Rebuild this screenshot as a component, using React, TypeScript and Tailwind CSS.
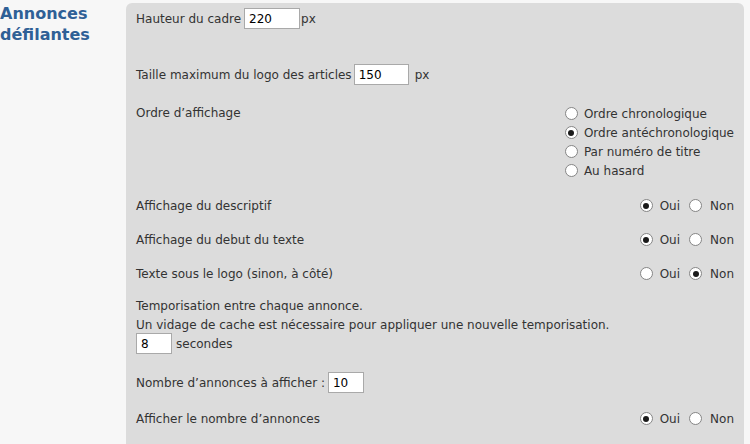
const font = { fontFamily: '"DejaVu Sans", Verdana, sans-serif' };

function Radio({ checked }: { checked?: boolean }) {
  return (
    <span className="flex h-[13px] w-[13px] shrink-0 items-center justify-center rounded-full border border-[#858585] bg-white">
      {checked && <span className="h-[6px] w-[6px] rounded-full bg-[#1a1a1a]" />}
    </span>
  );
}

function Field({ value, w }: { value: string; w: string }) {
  return (
    <span className={`flex h-[21px] items-center border border-[#a9a9a9] bg-white pl-[4px] text-black ${w}`}>
      {value}
    </span>
  );
}

function YesNo({ yes }: { yes: boolean }) {
  return (
    <div className="flex items-center">
      <Radio checked={yes} />
      <span className="ml-[7px]">Oui</span>
      <span className="ml-[9px]"><Radio checked={!yes} /></span>
      <span className="ml-[8px]">Non</span>
    </div>
  );
}

function ToggleRow({ label, yes, mt }: { label: string; yes: boolean; mt: string }) {
  return (
    <div className={`flex h-[19px] items-center justify-between ${mt}`}>
      <span>{label}</span>
      <YesNo yes={yes} />
    </div>
  );
}

export default function App() {
  const orders = [
    { label: 'Ordre chronologique', checked: false },
    { label: 'Ordre antéchronologique', checked: true },
    { label: 'Par numéro de titre', checked: false },
    { label: 'Au hasard', checked: false },
  ];

  return (
    <div className="flex min-h-[444px] bg-[#f7f7f7] text-[12px] text-[#333]" style={font}>
      {/* titre de section */}
      <div className="w-[126px] shrink-0 pt-[3px]">
        <h2 className="text-[16px] leading-[21px] font-bold text-[#2f6096]">
          Annonces
          <br />
          défilantes
        </h2>
      </div>

      {/* panneau des options */}
      <div className="mt-[3px] mr-[6px] flex-1 rounded-t-[6px] bg-[#dcdcdc] px-[10px] pt-[5px] pb-[20px]">
        <div className="flex h-[21px] items-center">
          <span>Hauteur du cadre</span>
          <span className="ml-[3px]"><Field value="220" w="w-[56px]" /></span>
          <span className="ml-[1px]">px</span>
        </div>

        <div className="mt-[35px] flex h-[21px] items-center">
          <span>Taille maximum du logo des articles</span>
          <span className="ml-[2px]"><Field value="150" w="w-[55px]" /></span>
          <span className="ml-[6px]">px</span>
        </div>

        <div className="mt-[19px] flex justify-between">
          <span className="leading-[19px]">Ordre d’affichage</span>
          <div className="flex flex-col">
            {orders.map((o) => (
              <div key={o.label} className="flex h-[19px] items-center">
                <Radio checked={o.checked} />
                <span className="ml-[6px]">{o.label}</span>
              </div>
            ))}
          </div>
        </div>

        <ToggleRow label="Affichage du descriptif" yes mt="mt-[16px]" />
        <ToggleRow label="Affichage du debut du texte" yes mt="mt-[15px]" />
        <ToggleRow label="Texte sous le logo (sinon, à côté)" yes={false} mt="mt-[15px]" />

        <div className="mt-[14px] leading-[19px]">
          <p>Temporisation entre chaque annonce.</p>
          <p>Un vidage de cache est nécessaire pour appliquer une nouvelle temporisation.</p>
        </div>
        <div className="-mt-[2px] flex h-[21px] items-center">
          <Field value="8" w="w-[36px]" />
          <span className="ml-[4px]">secondes</span>
        </div>

        <div className="mt-[18px] flex h-[21px] items-center">
          <span>Nombre d’annonces à afficher :</span>
          <span className="ml-[3px]"><Field value="10" w="w-[36px]" /></span>
        </div>

        <ToggleRow label="Afficher le nombre d’annonces" yes mt="mt-[16px]" />
      </div>
    </div>
  );
}
